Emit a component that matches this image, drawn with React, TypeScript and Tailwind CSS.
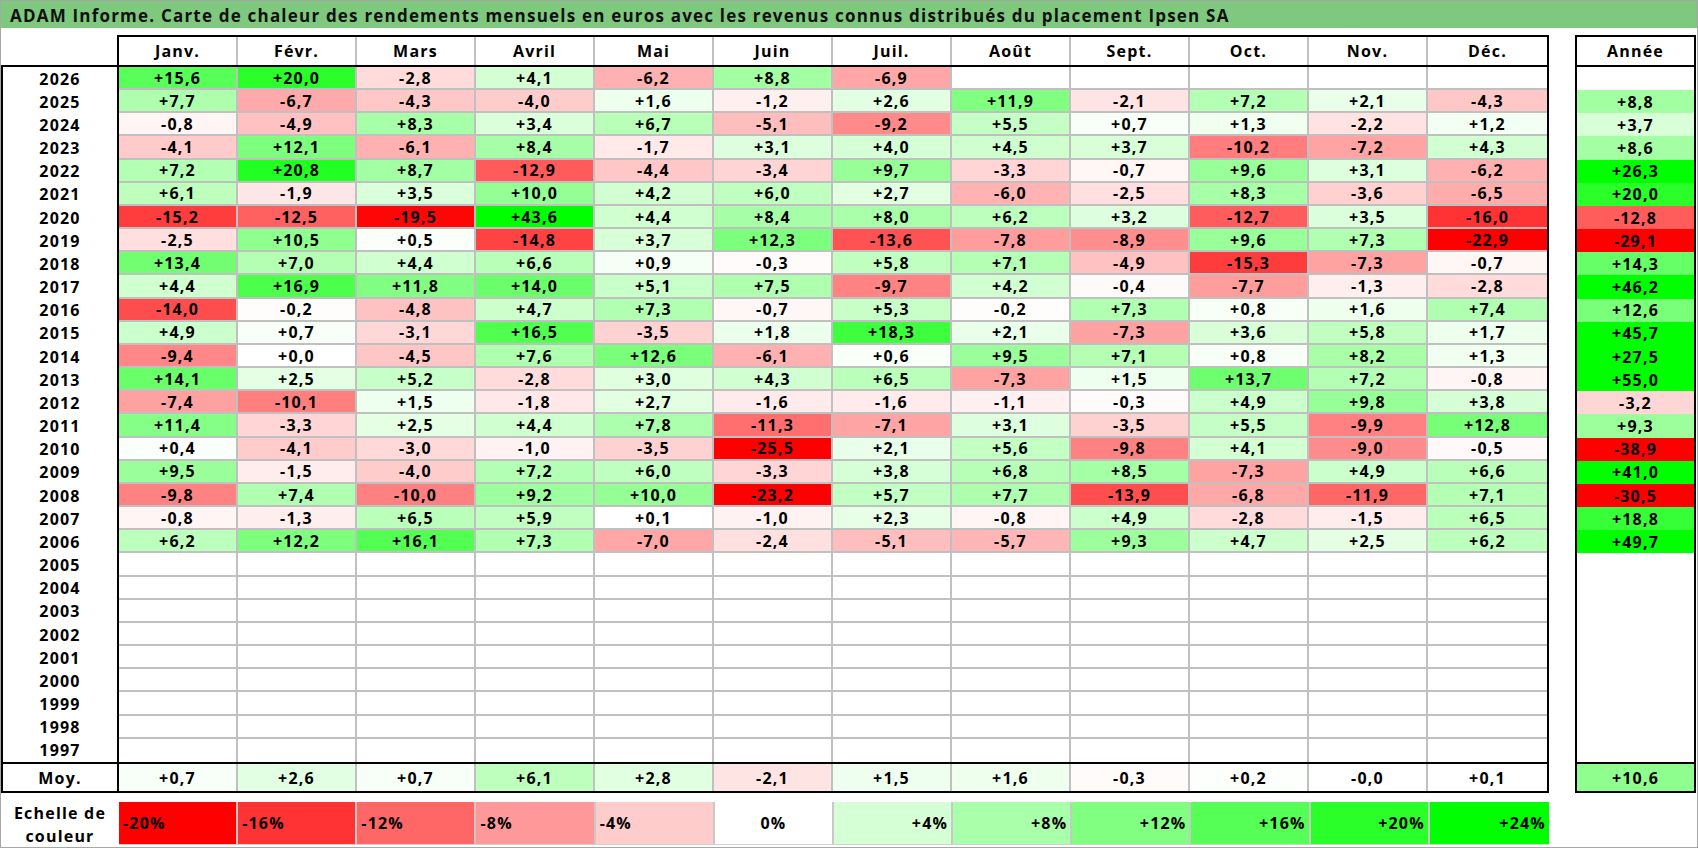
const months = ["Janv.", "Févr.", "Mars", "Avril", "Mai", "Juin", "Juil.", "Août", "Sept.", "Oct.", "Nov.", "Déc."]

// year, 12 monthly values, yearly total ("" = no data)
const rows: [string, string[], string][] = [
  ["2026", ["+15,6", "+20,0", "-2,8", "+4,1", "-6,2", "+8,8", "-6,9", "", "", "", "", ""], ""],
  ["2025", ["+7,7", "-6,7", "-4,3", "-4,0", "+1,6", "-1,2", "+2,6", "+11,9", "-2,1", "+7,2", "+2,1", "-4,3"], "+8,8"],
  ["2024", ["-0,8", "-4,9", "+8,3", "+3,4", "+6,7", "-5,1", "-9,2", "+5,5", "+0,7", "+1,3", "-2,2", "+1,2"], "+3,7"],
  ["2023", ["-4,1", "+12,1", "-6,1", "+8,4", "-1,7", "+3,1", "+4,0", "+4,5", "+3,7", "-10,2", "-7,2", "+4,3"], "+8,6"],
  ["2022", ["+7,2", "+20,8", "+8,7", "-12,9", "-4,4", "-3,4", "+9,7", "-3,3", "-0,7", "+9,6", "+3,1", "-6,2"], "+26,3"],
  ["2021", ["+6,1", "-1,9", "+3,5", "+10,0", "+4,2", "+6,0", "+2,7", "-6,0", "-2,5", "+8,3", "-3,6", "-6,5"], "+20,0"],
  ["2020", ["-15,2", "-12,5", "-19,5", "+43,6", "+4,4", "+8,4", "+8,0", "+6,2", "+3,2", "-12,7", "+3,5", "-16,0"], "-12,8"],
  ["2019", ["-2,5", "+10,5", "+0,5", "-14,8", "+3,7", "+12,3", "-13,6", "-7,8", "-8,9", "+9,6", "+7,3", "-22,9"], "-29,1"],
  ["2018", ["+13,4", "+7,0", "+4,4", "+6,6", "+0,9", "-0,3", "+5,8", "+7,1", "-4,9", "-15,3", "-7,3", "-0,7"], "+14,3"],
  ["2017", ["+4,4", "+16,9", "+11,8", "+14,0", "+5,1", "+7,5", "-9,7", "+4,2", "-0,4", "-7,7", "-1,3", "-2,8"], "+46,2"],
  ["2016", ["-14,0", "-0,2", "-4,8", "+4,7", "+7,3", "-0,7", "+5,3", "-0,2", "+7,3", "+0,8", "+1,6", "+7,4"], "+12,6"],
  ["2015", ["+4,9", "+0,7", "-3,1", "+16,5", "-3,5", "+1,8", "+18,3", "+2,1", "-7,3", "+3,6", "+5,8", "+1,7"], "+45,7"],
  ["2014", ["-9,4", "+0,0", "-4,5", "+7,6", "+12,6", "-6,1", "+0,6", "+9,5", "+7,1", "+0,8", "+8,2", "+1,3"], "+27,5"],
  ["2013", ["+14,1", "+2,5", "+5,2", "-2,8", "+3,0", "+4,3", "+6,5", "-7,3", "+1,5", "+13,7", "+7,2", "-0,8"], "+55,0"],
  ["2012", ["-7,4", "-10,1", "+1,5", "-1,8", "+2,7", "-1,6", "-1,6", "-1,1", "-0,3", "+4,9", "+9,8", "+3,8"], "-3,2"],
  ["2011", ["+11,4", "-3,3", "+2,5", "+4,4", "+7,8", "-11,3", "-7,1", "+3,1", "-3,5", "+5,5", "-9,9", "+12,8"], "+9,3"],
  ["2010", ["+0,4", "-4,1", "-3,0", "-1,0", "-3,5", "-25,5", "+2,1", "+5,6", "-9,8", "+4,1", "-9,0", "-0,5"], "-38,9"],
  ["2009", ["+9,5", "-1,5", "-4,0", "+7,2", "+6,0", "-3,3", "+3,8", "+6,8", "+8,5", "-7,3", "+4,9", "+6,6"], "+41,0"],
  ["2008", ["-9,8", "+7,4", "-10,0", "+9,2", "+10,0", "-23,2", "+5,7", "+7,7", "-13,9", "-6,8", "-11,9", "+7,1"], "-30,5"],
  ["2007", ["-0,8", "-1,3", "+6,5", "+5,9", "+0,1", "-1,0", "+2,3", "-0,8", "+4,9", "-2,8", "-1,5", "+6,5"], "+18,8"],
  ["2006", ["+6,2", "+12,2", "+16,1", "+7,3", "-7,0", "-2,4", "-5,1", "-5,7", "+9,3", "+4,7", "+2,5", "+6,2"], "+49,7"],
  ...["2005", "2004", "2003", "2002", "2001", "2000", "1999", "1998", "1997"].map(
    (y) => [y, Array(12).fill(""), ""] as [string, string[], string]
  ),
]

const avg = ["+0,7", "+2,6", "+0,7", "+6,1", "+2,8", "-2,1", "+1,5", "+1,6", "-0,3", "+0,2", "-0,0", "+0,1"]
const avgYear = "+10,6"

const scale = ["-20%", "-16%", "-12%", "-8%", "-4%", "0%", "+4%", "+8%", "+12%", "+16%", "+20%", "+24%"]

// red below zero (full at -20), green above (full at +24)
function heat(s: string) {
  if (!s) return undefined
  const v = parseFloat(s.replace(",", ".").replace("%", ""))
  if (v < 0) {
    const c = Math.round(255 * (1 - Math.min(-v / 20, 1)))
    return `rgb(255,${c},${c})`
  }
  const c = Math.round(255 * (1 - Math.min(v / 24, 1)))
  return `rgb(${c},255,${c})`
}

export default function App() {
  return (
    <div className="w-[1698px] h-[848px] overflow-hidden border border-[#a6a6a6] bg-white font-['Open_Sans',sans-serif] font-bold text-[16px] leading-[18px] tracking-[1.2px] text-black">
      <div className="h-[27px] bg-[#7fc97f] pl-[9px] pt-[2px] flex items-center text-[17px] tracking-[1.2px] text-[#111]">
        ADAM Informe. Carte de chaleur des rendements mensuels en euros avec les revenus connus distribués du placement Ipsen SA
      </div>

      <div className="mt-[7px] flex">
        {/* monthly table */}
        <div className="w-[1548px]">
          <div className="h-[32px] flex">
            <div className="w-[116px] border-b-2 border-black" />
            <div className="flex-1 grid grid-cols-12 border-2 border-black">
              {months.map((m, i) => (
                <div key={m} className={`flex items-center justify-center ${i < 11 ? "border-r-2 border-[#c0c0c0]" : ""}`}>
                  {m}
                </div>
              ))}
            </div>
          </div>

          <div className="h-[695px] flex">
            <div className="w-[116px] border-l-2 border-black grid grid-rows-[repeat(30,minmax(0,1fr))]">
              {rows.map(([y]) => (
                <div key={y} className="flex items-center justify-center">
                  {y}
                </div>
              ))}
            </div>
            <div className="flex-1 border-x-2 border-black grid grid-cols-12 grid-rows-[repeat(30,minmax(0,1fr))]">
              {rows.map(([y, vals], r) =>
                vals.map((v, i) => (
                  <div
                    key={`${y}-${i}`}
                    className={`flex items-center justify-center border-[#c0c0c0] ${i < 11 ? "border-r-2" : ""} ${r < 29 ? "border-b-2" : ""}`}
                    style={{ backgroundColor: heat(v) }}
                  >
                    {v}
                  </div>
                ))
              )}
            </div>
          </div>

          <div className="h-[31px] flex border-y-2 border-black">
            <div className="w-[116px] border-l-2 border-black flex items-center justify-center">Moy.</div>
            <div className="flex-1 grid grid-cols-12 border-x-2 border-black">
              {avg.map((v, i) => (
                <div
                  key={i}
                  className={`flex items-center justify-center ${i < 11 ? "border-r-2 border-[#c0c0c0]" : ""}`}
                  style={{ backgroundColor: heat(v) }}
                >
                  {v}
                </div>
              ))}
            </div>
          </div>
        </div>

        {/* yearly column */}
        <div className="w-[121px] ml-[26px]">
          <div className="h-[32px] border-2 border-black flex items-center justify-center">Année</div>
          <div className="h-[695px] border-x-2 border-black grid grid-rows-[repeat(30,minmax(0,1fr))]">
            {rows.map(([y, , total]) => (
              <div key={y} className="flex items-center justify-center" style={{ backgroundColor: heat(total) }}>
                {total}
              </div>
            ))}
          </div>
          <div className="h-[31px] border-2 border-black flex items-center justify-center" style={{ backgroundColor: heat(avgYear) }}>
            {avgYear}
          </div>
        </div>
      </div>

      {/* colour scale */}
      <div className="mt-[9px] h-[43px] flex">
        <div className="w-[118px] flex flex-col items-center justify-center leading-[23px] pt-[2px]">
          <span>Echelle de</span>
          <span>couleur</span>
        </div>
        <div className="w-[1430px] grid grid-cols-12 border-b border-[#d0d0d0]">
          {scale.map((s, i) => (
            <div
              key={s}
              className={`flex items-center ${i < 5 ? "justify-start pl-[4px]" : i === 5 ? "justify-center" : "justify-end pr-[3px]"} ${i < 11 ? "border-r-2 border-[#c8c8c8]" : ""}`}
              style={{ backgroundColor: heat(s) }}
            >
              {s}
            </div>
          ))}
        </div>
      </div>
    </div>
  )
}
